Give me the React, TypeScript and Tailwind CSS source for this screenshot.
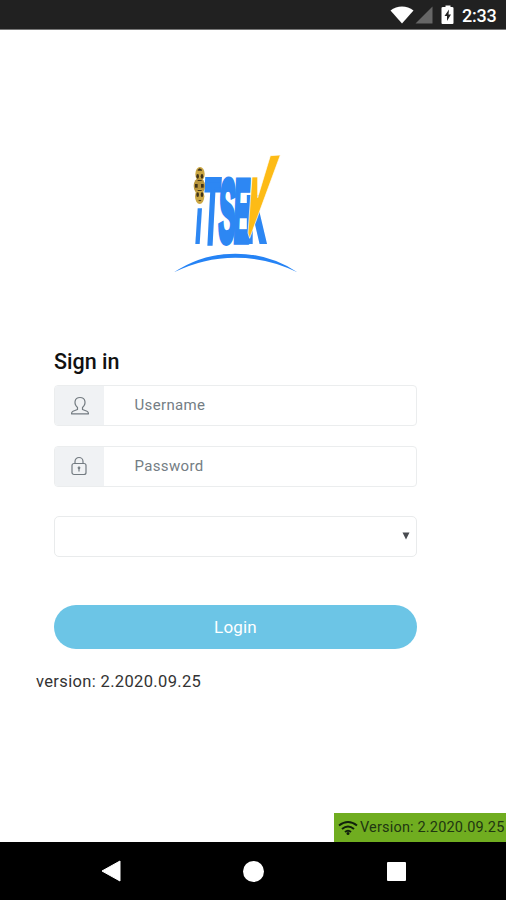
import type { ReactNode } from "react";

function StatusBar() {
  return (
    <header className="flex h-[30px] shrink-0 items-center justify-end border-b border-[#777] bg-[#212121] pr-[9px] text-white">
      <svg width="66" height="22" viewBox="0 0 66 22" className="mr-[6px]">
        <path d="M0.5 6.5C7 1 17 1 23.500 6.500L12 19.500Z" fill="#fff" />
        <path d="M42.500 2.500V19.500H25.500Z" fill="#666" />
        <path d="M53 3h2.500V1.500h5V3H62q1.500 0 1.500 1v15q0 1-1 1H52.500q-1 0-1-1V4q0-1 1.500-1Z" fill="#fff" />
        <path d="M59 5.500l-4.500 6.500h2.500v5l4-6.500h-2.500Z" fill="#222" />
      </svg>
      <span className="w-[35px] whitespace-nowrap pt-[2px] text-[18px] leading-5 font-medium tracking-[-0.2px]">2:33</span>
    </header>
  );
}

function Logo() {
  return (
    <svg width="140" height="135" viewBox="0 0 420 405" className="ml-[165px]" aria-label="iTSEK">
      <clipPath id="k-leg">
        <rect x="245" y="150" width="70" height="147" />
      </clipPath>
      <g fill="#2d87f3" stroke="#2d87f3" fontFamily="Liberation Sans" fontWeight="700">
        <text transform="translate(112 294) skewX(-3) scale(.28 1)" strokeWidth="16" fontSize="276">T</text>
        <text transform="translate(158 291) skewX(-2) scale(.285 1)" strokeWidth="18" fontSize="268">S</text>
        <text transform="translate(203 291) skewX(-2) scale(.275 1)" strokeWidth="16" fontSize="270">E</text>
        <g clipPath="url(#k-leg)">
          <text transform="translate(242 293) scale(.3 1)" strokeWidth="22" fontSize="276">K</text>
        </g>
      </g>
      <path d="M98 190H111L104 297H91Z" fill="#2d87f3" />
      <path d="M316 32L346 30L254 280L249 264L261 96H278V158Z" fill="#fdbb16" stroke="#fff" strokeWidth="2" />
      <g>
        <ellipse cx="105" cy="87" rx="14" ry="21" fill="#cba744" />
        <ellipse cx="103" cy="123" rx="17" ry="24" fill="#b9963e" />
        <ellipse cx="104" cy="154" rx="14" ry="23" fill="#cba744" />
        <g fill="#40341a">
          <ellipse cx="98" cy="94" rx="4" ry="7" />
          <ellipse cx="111" cy="94" rx="4" ry="7" />
          <rect x="90" y="117" width="8" height="11" />
          <rect x="108" y="117" width="8" height="11" />
          <ellipse cx="98" cy="149" rx="4" ry="7" />
          <ellipse cx="111" cy="149" rx="4" ry="7" />
          <path d="M98 74l6-4 7 4v3H98ZM98 105h12v3H98ZM98 135h12v3H98ZM99 165h11l-5 4Z" />
        </g>
      </g>
      <path d="M27 382Q111 326 211 326Q315 326 397 382Q310 338 211 338Q115 338 27 382Z" fill="#2583f5" />
    </svg>
  );
}

function Field({ label, children }: { label: string; children: ReactNode }) {
  return (
    <div className="flex h-[41px] w-[363px] overflow-hidden rounded-[4px] border border-[#ebedee]">
      <div className="flex w-[49px] items-center justify-center bg-[#f0f2f4]">{children}</div>
      <div className="flex items-center pl-[30.500px] text-[15px] tracking-[0.35px] text-[#747d84]">{label}</div>
    </div>
  );
}

export default function App() {
  return (
    <div className="flex h-[900px] w-[506px] flex-col overflow-hidden bg-white font-[Roboto,sans-serif]">
      <StatusBar />
      <main className="flex flex-1 flex-col pt-[115px]">
        <Logo />
        <section className="ml-[54px] mt-[68px] flex flex-col">
          <h1 className="h-[37px] text-[21.5px] leading-[27px] font-medium text-[#111]">Sign in</h1>
          <Field label="Username">
            <svg width="20" height="20" viewBox="0 0 20 20" fill="none" stroke="#737b81" strokeWidth="1.200" strokeLinejoin="round">
              <path d="M7.500 11.500C3.500 8 4.300 1.500 10 1.500s6.500 6.500 2.500 10v2l4.500 1.700q1.500.7 1.500 2.600H1.500q0-1.900 1.500-2.600L7.500 13.500Z" />
            </svg>
          </Field>
          <div className="mt-5">
            <Field label="Password">
              <svg width="18" height="20" viewBox="0 0 18 20" fill="none" stroke="#737b81" strokeWidth="1.200" className="mr-px mb-px">
                <rect x="2" y="7.500" width="14" height="11" rx="2" />
                <path d="M5 7.500V5.500a4 4 0 0 1 8 0v2M9 12v3.500" />
                <circle cx="9" cy="11.800" r=".8" />
              </svg>
            </Field>
          </div>
          <div className="mt-[29px] flex h-[41px] w-[363px] items-center justify-end rounded-[5px] border border-[#e9ebec] pr-[6px] pb-[2px]">
            <svg width="8" height="8" viewBox="0 0 8 8"><path d="M.5.500h7L4 7.500Z" fill="#494b50" /></svg>
          </div>
          <button className="mt-[48px] h-[44px] w-[363px] rounded-full bg-[#6cc5e6] pt-[2px] text-[17px] tracking-[0.2px] text-white">Login</button>
        </section>
        <p className="ml-[36px] mt-[21px] text-[16.5px] leading-6 tracking-[0.35px] text-[#333]">version: 2.2020.09.25</p>
        <div className="mt-auto flex h-[29px] w-[172px] items-center self-end bg-[#70ad20] pl-1 text-[#203611]">
          <svg width="20" height="16" viewBox="0 0 20 16" fill="none" stroke="#10200c" strokeWidth="2">
            <path d="M1 5.500Q10-1.500 19 5.500M4 9Q10 4 16 9M7 12Q10 9.500 13 12" />
            <circle cx="10" cy="13.500" r="1.500" fill="#10200c" stroke="none" />
          </svg>
          <span className="ml-[2px] whitespace-nowrap text-[14.5px] tracking-[0.18px]">Version: 2.2020.09.25</span>
        </div>
      </main>
      <nav className="flex h-[58px] shrink-0 items-center bg-black pl-[101px]">
        <svg width="20" height="22" viewBox="0 0 20 22"><path d="M19 1v20L1 11Z" fill="#fff" stroke="#fff" strokeLinejoin="round" /></svg>
        <span className="ml-[122px] size-[21px] rounded-full bg-white" />
        <span className="ml-[123px] size-[19px] rounded-[1px] bg-white" />
      </nav>
    </div>
  );
}
